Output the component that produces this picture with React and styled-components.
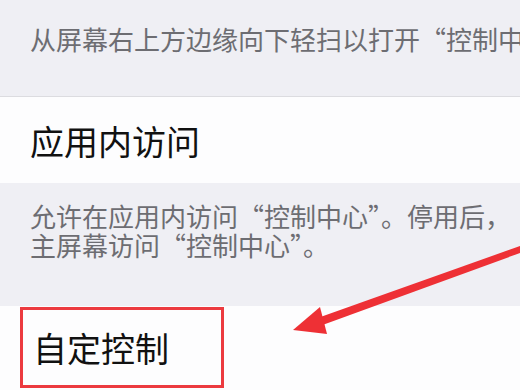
import React from 'react'
import styled, { createGlobalStyle } from 'styled-components';

const GlobalStyle = createGlobalStyle`
  html, body {
    margin: 0;
    padding: 0;
    background: #efeff4;
    font-family: "Noto Sans CJK SC", "Noto Sans", sans-serif;
    overflow: hidden;
  }
`;

const Page = styled.div`
  position: relative;
  width: 520px;
  height: 390px;
  overflow: hidden;
  background: #efeff4;
`;

const Footer = styled.div`
  box-sizing: border-box;
  height: ${p => p.h}px;
  padding: ${p => p.top}px 0 0 30px;
  background: #efeff4;
  color: #6d6d72;
  font-size: 26px;
  line-height: 29px;
  white-space: nowrap;
  overflow: hidden;
  border-bottom: ${p => p.line ? '1px solid #dcdce0' : 'none'};
`;

const Row = styled.div`
  box-sizing: border-box;
  height: ${p => p.h}px;
  display: flex;
  align-items: ${p => p.align || 'center'};
  padding-left: ${p => p.left}px;
  background: #fdfdfe;
  color: #111;
  font-size: 34px;
  white-space: nowrap;
`;

const Highlight = styled.div`
  box-sizing: border-box;
  width: 204px;
  height: 81px;
  margin-top: 1px;
  padding-left: 10px;
  display: flex;
  align-items: center;
  border: 3px solid #ec3a3f;
`;

const Arrow = styled.svg`
  position: absolute;
  left: 0;
  top: 0;
  pointer-events: none;
`;

function App() {
  return (
    <>
      <GlobalStyle />
      <Page>
        <Footer h={97} top={24} line>从屏幕右上方边缘向下轻扫以打开“控制中心”。</Footer>
        <Row h={86} left={30}>应用内访问</Row>
        <Footer h={123} top={18}>
          允许在应用内访问“控制中心”。停用后，<br />
          主屏幕访问“控制中心”。
        </Footer>
        <Row h={90} left={20} align="flex-start">
          <Highlight>自定控制</Highlight>
        </Row>
        <Arrow width="520" height="390" viewBox="0 0 520 390">
          <polygon points="312,320 317,327 520,253 520,246" fill="#ee3035" />
          <polygon points="293,330 320,307 327,334" fill="#ee3035" />
        </Arrow>
      </Page>
    </>
  )
}

export default App
